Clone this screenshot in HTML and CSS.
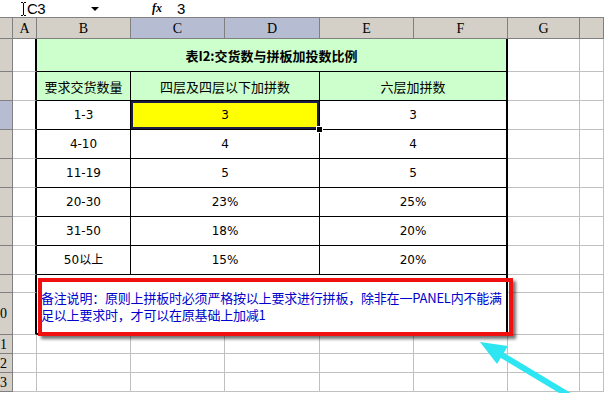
FILE: index.html
```html
<!DOCTYPE html>
<html lang="zh-CN">
<head>
    <meta charset="UTF-8">
    <title>表I2 交货数与拼板加投数比例</title>
    <link rel="stylesheet" href="styles.css">
</head>
<body>

<div class="formula-bar">
    <div class="name-box">
        <svg class="ibeam" width="5" height="14" viewBox="0 0 5 14">
            <path d="M0 0.5H2M3 0.5H5M2.5 1V13M0 13.5H2M3 13.5H5" stroke="#000" stroke-width="1" fill="none"/>
        </svg>
        <span>C3</span>
    </div>
    <span class="dropdown"></span>
    <span class="fx">fx</span>
    <span class="formula">3</span>
</div>

<div class="sheet">
    <!-- column headers -->
    <div class="c hd"></div>
    <div class="c hd">A</div>
    <div class="c hd">B</div>
    <div class="c hd on">C</div>
    <div class="c hd on">D</div>
    <div class="c hd">E</div>
    <div class="c hd">F</div>
    <div class="c hd">G</div>
    <div class="c hd"></div>

    <!-- row 1 -->
    <div class="c rh"></div>
    <div class="c edge"></div>
    <div class="c t title">表I2:交货数与拼板加投数比例</div>
    <div class="c"></div>
    <div class="c"></div>

    <!-- row 2 -->
    <div class="c rh"></div>
    <div class="c edge"></div>
    <div class="c t green">要求交货数量</div>
    <div class="c t green span2">四层及四层以下加拼数</div>
    <div class="c t green span2 right">六层加拼数</div>
    <div class="c"></div>
    <div class="c"></div>

    <!-- row 3 -->
    <div class="c rh on"></div>
    <div class="c edge"></div>
    <div class="c t num">1-3</div>
    <div class="c t span2 num sel">3<span class="handle"></span></div>
    <div class="c t span2 right num">3</div>
    <div class="c"></div>
    <div class="c"></div>

    <!-- row 4 -->
    <div class="c rh"></div>
    <div class="c edge"></div>
    <div class="c t num">4-10</div>
    <div class="c t span2 num">4</div>
    <div class="c t span2 right num">4</div>
    <div class="c"></div>
    <div class="c"></div>

    <!-- row 5 -->
    <div class="c rh"></div>
    <div class="c edge"></div>
    <div class="c t num">11-19</div>
    <div class="c t span2 num">5</div>
    <div class="c t span2 right num">5</div>
    <div class="c"></div>
    <div class="c"></div>

    <!-- row 6 -->
    <div class="c rh"></div>
    <div class="c edge"></div>
    <div class="c t num">20-30</div>
    <div class="c t span2 num">23%</div>
    <div class="c t span2 right num">25%</div>
    <div class="c"></div>
    <div class="c"></div>

    <!-- row 7 -->
    <div class="c rh"></div>
    <div class="c edge"></div>
    <div class="c t num">31-50</div>
    <div class="c t span2 num">18%</div>
    <div class="c t span2 right num">20%</div>
    <div class="c"></div>
    <div class="c"></div>

    <!-- row 8 -->
    <div class="c rh"></div>
    <div class="c edge"></div>
    <div class="c t num">50以上</div>
    <div class="c t span2 num">15%</div>
    <div class="c t span2 right num">20%</div>
    <div class="c"></div>
    <div class="c"></div>

    <!-- rows 9-10, note spans both -->
    <div class="c rh"></div>
    <div class="c edge"></div>
    <div class="c note">
        <p>备注说明：原则上拼板时必须严格按以上要求进行拼板，除非在一PANEL内不能满<br>足以上要求时，才可以在原基础上加减1</p>
        <div class="red-box"></div>
    </div>
    <div class="c"></div>
    <div class="c"></div>

    <div class="c rh last">0</div>
    <div class="c edge"></div>
    <div class="c"></div>
    <div class="c"></div>

    <!-- rows 11-13 -->
    <div class="c rh last">1</div>
    <div class="c"></div><div class="c"></div><div class="c"></div><div class="c"></div>
    <div class="c"></div><div class="c"></div><div class="c"></div><div class="c"></div>

    <div class="c rh last">2</div>
    <div class="c"></div><div class="c"></div><div class="c"></div><div class="c"></div>
    <div class="c"></div><div class="c"></div><div class="c"></div><div class="c"></div>

    <div class="c rh last">3</div>
    <div class="c"></div><div class="c"></div><div class="c"></div><div class="c"></div>
    <div class="c"></div><div class="c"></div><div class="c"></div><div class="c"></div>
</div>

<svg class="arrow" width="604" height="393" viewBox="0 0 604 393">
    <line x1="500" y1="354" x2="580" y2="402" stroke="#2ee6f2" stroke-width="6"/>
    <polygon points="480,342 508,346 497,364" fill="#2ee6f2"/>
</svg>

</body>
</html>
```

FILE: styles.css
```css
html, body {
    margin: 0;
    padding: 0;
}
body {
    width: 604px;
    height: 393px;
    overflow: hidden;
    position: relative;
    background-color: #ffffff;
    font-family: "Noto Sans CJK SC", "Liberation Sans", sans-serif;
    font-size: 13px;
}
.formula-bar {
    height: 17px;
    border-bottom: 1px solid #808080;
    display: flex;
    align-items: center;
    padding-left: 21px;
    background-color: #ffffff;
    font-family: "Liberation Sans", sans-serif;
}
.name-box {
    width: 70px;
    display: flex;
    align-items: center;
    font-size: 15px;
    letter-spacing: -0.5px;
}
.ibeam {
    margin-right: 1px;
}
.dropdown {
    width: 0;
    height: 0;
    border-left: 4px solid transparent;
    border-right: 4px solid transparent;
    border-top: 4px solid #000000;
    margin-right: 53px;
    margin-top: 1px;
}
.fx {
    font-family: "Liberation Serif", serif;
    font-style: italic;
    font-weight: bold;
    font-size: 12px;
    width: 12px;
    margin-right: 13px;
}
.formula {
    font-size: 15px;
}
.sheet {
    display: grid;
    grid-template-columns: 13px 24px 94px 94px 95px 94px 94px 72px 24px;
    grid-template-rows: 21px 33px 29px repeat(6, 29px) 18px 42px 19px 19px 19px;
}
.c {
    box-sizing: border-box;
    border-right: 1px solid #c0c0c0;
    border-bottom: 1px solid #c0c0c0;
    display: flex;
    align-items: center;
    justify-content: center;
    line-height: 15px;
    white-space: nowrap;
}
.hd {
    background-color: #d4d0c8;
    border-color: #808080;
    font-family: "Liberation Serif", serif;
    font-size: 14px;
}
.hd.on {
    background-color: #b6bdd2;
}
.rh {
    background-color: #d4d0c8;
    border-color: #808080;
    font-family: "Liberation Serif", serif;
    font-size: 14px;
}
.rh.on {
    background-color: #b6bdd2;
}
.rh.last {
    justify-content: flex-start;
    padding-left: 0;
}
.edge {
    border-right: 2px solid #000000;
}
.t {
    border-color: #000000;
}
.title {
    grid-column: span 5;
    background-color: #ccffcc;
    font-weight: bold;
    border-right: 2px solid #000000;
}
.green {
    background-color: #ccffcc;
}
.span2 {
    grid-column: span 2;
}
.right {
    border-right: 2px solid #000000;
}
.num {
    font-family: "DejaVu Sans", "Noto Sans CJK SC", sans-serif;
    font-size: 12px;
}
.sel {
    position: relative;
    background-color: #ffff00;
    box-shadow: inset 0 0 0 2px #1c1c4a;
}
.handle {
    position: absolute;
    right: -4px;
    bottom: -4px;
    width: 5px;
    height: 5px;
    background-color: #000000;
    border: 1px solid #ffffff;
}
.note {
    grid-column: span 5;
    grid-row: span 2;
    position: relative;
    border-right: 2px solid #000000;
    border-bottom: 2px solid #000000;
    align-items: flex-start;
    justify-content: flex-start;
    color: #0000cc;
}
.note p {
    margin: 0;
    padding: 14px 0 0 4px;
    line-height: 17px;
    letter-spacing: -0.2px;
    white-space: nowrap;
}
.red-box {
    position: absolute;
    left: 1px;
    top: 3px;
    width: 475px;
    height: 58px;
    box-sizing: border-box;
    border: 4px solid #f01010;
    box-shadow: 3px 3px 3px rgba(0, 0, 0, 0.55);
}
.arrow {
    position: absolute;
    left: 0;
    top: 0;
    pointer-events: none;
}
```
